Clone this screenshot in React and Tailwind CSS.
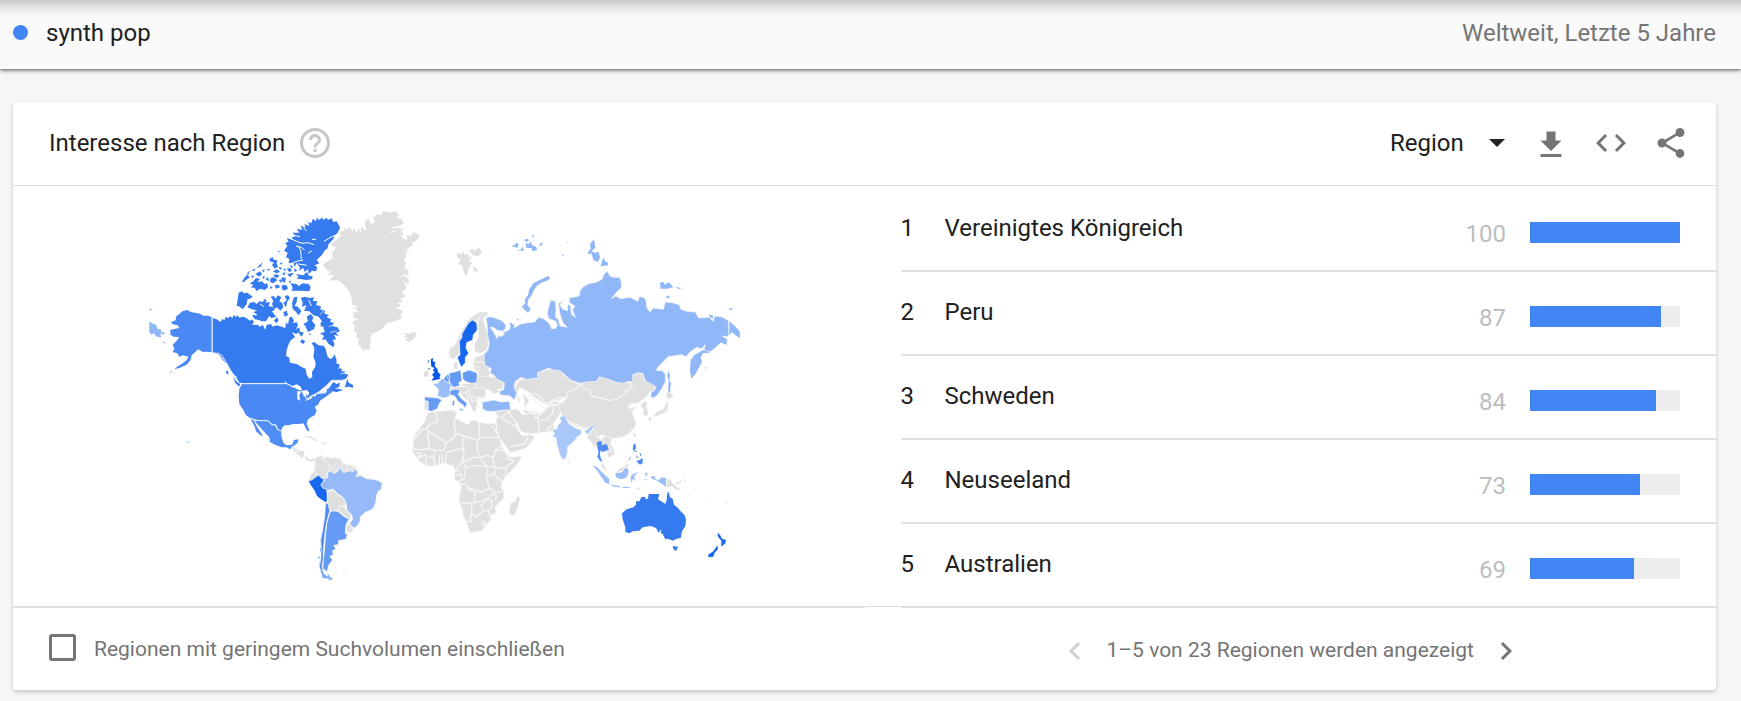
import React, { useState } from "react";

const regions = [
  { name: "Vereinigtes Königreich", value: 100 },
  { name: "Peru", value: 87 },
  { name: "Schweden", value: 84 },
  { name: "Neuseeland", value: 73 },
  { name: "Australien", value: 69 },
];

const Icon = ({ d, className = "" }) => (
  <svg viewBox="0 0 24 24" className={`size-9 fill-current ${className}`} aria-hidden="true">
    <path d={d} />
  </svg>
);

const icons = {
  help: "M11 18h2v-2h-2v2zm1-16C6.48 2 2 6.48 2 12s4.48 10 10 10 10-4.48 10-10S17.52 2 12 2zm0 18c-4.41 0-8-3.59-8-8s3.59-8 8-8 8 3.59 8 8-3.59 8-8 8zm0-14c-2.21 0-4 1.79-4 4h2c0-1.1.9-2 2-2s2 .9 2 2c0 2-3 1.75-3 5h2c0-2.25 3-2.5 3-5 0-2.21-1.79-4-4-4z",
  download: "M19 9h-4V3H9v6H5l7 7 7-7zM5 18v2h14v-2H5z",
  embed: "M9.4 16.6L4.8 12l4.6-4.6L8 6l-6 6 6 6 1.4-1.4zm5.2 0l4.6-4.6-4.6-4.6L16 6l6 6-6 6-1.4-1.4z",
  share: "M18 16.08c-.76 0-1.44.3-1.96.77L8.91 12.7c.05-.23.09-.46.09-.7s-.04-.47-.09-.7l7.05-4.11c.54.5 1.25.81 2.04.81 1.66 0 3-1.34 3-3s-1.34-3-3-3-3 1.34-3 3c0 .24.04.47.09.7L8.04 9.81C7.5 9.31 6.79 9 6 9c-1.66 0-3 1.34-3 3s1.34 3 3 3c.79 0 1.5-.31 2.04-.81l7.12 4.16c-.05.21-.08.43-.08.65 0 1.61 1.31 2.92 2.92 2.92s2.92-1.31 2.92-2.92-1.31-2.92-2.92-2.92z",
  left: "M15.41 7.41L14 6l-6 6 6 6 1.41-1.41L10.83 12z",
  right: "M10 6L8.59 7.41 13.17 12l-4.58 4.59L10 18l6-6z",
};

const WorldMap = () => (
  <svg viewBox="-18 6 1830 1170" className="w-full max-w-[610px]" role="img" aria-label="Interesse nach Region">
    {/* Nordamerika */}
    <g stroke="#f5f5f5" strokeWidth="0">
      <path fill="#4a89f3" d="M215,352 205,347 190,347 180,341 165,338 152,336 142,330 128,333 118,342 107,350 108,360 94,366 96,372 113,376 118,384 106,386 90,390 92,398 90,403 100,410 118,411 112,420 104,428 98,434 103,446 98,456 112,460 118,470 130,466 145,470 140,480 128,490 112,500 102,508 118,504 140,494 152,480 155,466 168,454 175,448 188,456 200,455 215,457Z M88,517 97,513 95,517Z M28,326 36,328 30,331Z M144,724 148,726 145,729Z" />
      <path fill="#367af0" d="M217,354 230,358 242,366 246,357 254,360 256,351 264,354 270,349 278,354 281,344 288,352 292,346 298,353 308,350 318,353 330,362 336,358 342,366 336,375 352,374 360,380 368,374 376,390 380,374 392,372 398,380 410,376 425,380 436,384 438,366 444,374 448,352 456,350 462,362 458,370 470,366 474,376 468,388 478,382 480,395 468,402 456,396 465,412 453,420 447,430 440,450 438,468 447,472 450,488 470,492 486,502 497,506 500,525 508,536 517,532 516,516 525,502 527,488 520,470 523,450 522,440 515,430 522,426 536,436 550,437 556,444 560,460 563,470 572,478 580,470 583,462 590,480 589,490 600,494 596,502 606,508 604,514 616,514 612,520 625,524 618,536 606,540 575,541 568,548 548,565 530,580 515,585 500,596 498,580 485,572 470,566 455,558 440,549 308,549 298,548 290,535 280,522 268,505 262,492 248,480 238,466 228,460 217,458Z" />
      <path fill="#367af0" d="M622,536 626,548 640,556 638,564 628,560 614,562 618,550Z M570,560 580,546 590,552 600,548 598,560 584,566 594,566 610,570 590,576 576,574 572,582 565,572Z M280,530 290,545 300,552 298,560 286,550Z M258,512 264,514 266,524 259,520Z" />
      <path fill="#367af0" d="M598,78 590,64 580,66 575,55 564,60 560,53 550,60 546,52 538,60 530,53 528,64 518,56 514,70 504,66 508,78 494,72 496,84 482,76 486,90 470,86 478,98 458,98 466,108 454,114 458,120 440,114 446,125 436,128 442,138 432,152 443,158 438,172 448,176 446,190 460,188 464,200 470,188 480,204 476,212 490,204 494,216 504,208 506,222 516,212 528,214 532,202 524,196 538,190 530,180 545,166 555,150 562,146 566,132 580,118 584,106 592,100 600,84Z" />
      <path fill="#367af0" d="M468,222 490,226 500,216 508,228 518,228 516,238 500,240 484,238 470,236 476,230Z M452,250 470,252 476,258 488,250 506,252 512,262 508,274 480,272 455,272 458,264Z M440,206 450,204 456,212 448,216Z M425,232 438,234 434,248 426,244Z M442,222 462,218 450,232Z M446,244 454,242 450,250Z" />
      <path fill="#367af0" d="M296,278 305,274 312,280 322,278 338,290 330,296 322,298 320,312 308,328 296,318 290,318Z M330,308 342,306 350,312 358,304 368,306 374,296 380,302 376,308 390,306 386,318 400,322 404,330 396,334 408,350 394,354 388,348 378,364 366,364 356,360 344,358 336,346 352,344 340,336 352,332 336,328 322,322Z" />
      <path fill="#367af0" d="M306,246 314,232 328,218 324,228 330,232 318,240 312,246Z M318,222 332,210 326,220Z M334,214 346,204 344,212Z M350,204 362,192 368,186 362,200Z M330,250 340,244 348,234 360,236 352,246 366,244 374,252 382,250 384,262 374,270 360,266 350,274 344,264 332,262 340,256Z M346,222 360,214 366,222 358,230Z M364,212 374,208 372,216Z M376,238 384,232 388,244Z M388,176 398,172 402,180 412,180 410,190 414,200 404,206 396,194 402,188 390,184Z M418,188 428,188 424,194Z M380,208 390,206 388,212Z M392,234 402,232 412,240 400,250 390,246Z M416,240 426,238 424,250Z M414,152 420,154 416,158Z M398,214 412,208 420,216 410,220Z M426,222 436,216 434,226Z" />
      <path fill="#367af0" d="M404,222 418,226 412,234 402,230Z M428,254 440,256 444,266 432,272 424,264Z M404,256 416,254 420,262 408,266Z M390,258 398,262 392,268Z M448,196 458,198 456,206Z M416,200 426,204 420,210Z M432,204 438,210 432,214Z M462,204 472,212 464,216Z M334,228 342,226 338,236Z M366,230 374,228 372,238Z" />
      <path fill="#367af0" d="M392,290 402,288 406,296 414,286 424,292 418,304 426,308 430,320 422,332 410,322 402,328 396,312 400,302Z M434,288 444,286 450,294 442,304 438,322 430,310 440,300Z M402,362 410,352 416,360 410,370Z M430,336 440,332 444,346 434,350Z M420,310 426,316 422,322Z" />
      <path fill="#367af0" d="M462,292 472,290 470,306 464,318 474,320 484,334 476,346 466,334 458,326 456,310Z M482,294 494,290 508,294 522,292 518,302 532,304 528,314 544,320 540,328 556,332 552,340 566,346 560,352 574,358 570,366 582,368 576,378 592,382 600,394 588,398 596,408 582,404 588,418 578,420 584,432 580,442 566,432 556,418 546,420 552,408 540,400 554,396 550,380 540,372 546,364 536,350 520,346 508,334 492,332 500,316 486,320 488,306Z M500,350 512,342 520,352 516,364 526,374 522,388 504,396 496,378 490,372 504,364Z M476,394 492,398 484,410 478,402Z M486,418 496,424 490,432 480,426Z M544,370 548,378 542,382Z M508,400 514,404 508,406Z" />
      <g fill="none" stroke="#fff" strokeWidth="3">
        <path d="M452,116 470,124 486,130 504,128 522,134 M468,138 484,142 494,150 M484,178 482,150 474,140 M552,124 568,114 584,106 M456,190 470,184 490,180 M504,160 516,152 M490,84 500,92 M462,106 480,110 M476,192 500,196 M360,312 372,320 M506,300 514,318 M334,340 350,346 M516,118 528,118" />
        <path strokeWidth="2" d="M232,458 246,466 256,482 266,500 276,518 290,538 M280,524 292,532 M552,330 540,344 M580,376 566,380 M590,392 570,398 M606,500 594,506 M616,518 602,522" />
      </g>
      <path fill="#4a89f3" d="M306,552 440,552 456,560 480,568 500,598 516,588 532,582 556,580 562,566 572,562 572,576 566,584 552,594 540,602 534,614 524,620 530,632 524,646 512,652 503,660 500,672 508,690 504,695 496,682 490,670 478,672 460,672 445,676 434,676 426,684 424,692 415,690 408,674 398,674 386,662 350,660 330,654 318,646 310,630 298,612 296,590 298,566Z" />
      <path fill="#508df4" d="M344,663 385,664 395,676 405,676 412,690 424,694 424,708 430,728 440,736 456,734 462,720 476,718 472,730 460,738 450,748 440,742 425,742 405,734 390,726 388,712 375,698 360,682Z M332,657 340,659 352,682 368,706 364,708 348,694 344,680Z" />
      <path fill="#fff" d="M452,560 470,553 482,560 486,570 476,570 466,564Z M472,574 484,574 478,586 480,602 472,598Z M486,572 500,570 508,578 504,588 496,580 492,590Z M494,602 504,594 518,588 514,596Z M516,586 530,582 526,590Z" />
      <path fill="none" stroke="#dce7fb" strokeWidth="3" d="M217,350V458 L232,460 244,470 254,482 M306,551H436V545L440,551 456,558 M498,601 514,592 528,580 548,576 560,556 574,541H610 M548,578 558,578 560,566 M330,655 350,661 384,662 396,675 406,673 412,688 424,693" />
    </g>

    {/* Grönland und Island */}
    <path fill="#e0e0e0" d="M598,100 604,90 614,96 612,84 624,88 628,80 640,96 640,80 652,102 654,84 664,100 662,78 680,92 674,68 684,54 694,72 706,66 700,54 710,42 724,44 730,33 748,38 766,34 778,46 768,52 784,58 792,70 778,78 764,80 748,88 770,84 790,86 782,96 790,100 786,114 802,122 800,106 812,108 822,96 840,106 828,124 816,126 818,136 804,144 806,156 798,156 800,170 792,178 798,190 792,204 806,210 804,226 792,224 808,240 804,254 792,250 800,264 786,276 796,290 780,296 788,306 770,310 784,316 770,324 790,334 780,346 788,352 770,362 740,370 728,385 710,396 698,400 690,412 692,426 688,452 674,446 674,456 662,442 654,430 656,416 648,412 652,400 642,392 644,376 636,366 654,358 636,350 644,344 636,338 656,334 640,324 654,318 636,314 634,290 625,270 605,248 590,240 570,242 576,230 584,226 560,224 574,216 560,210 548,195 562,184 578,176 576,160 590,140 578,140 574,130 592,118 604,106Z M783,396 790,402 797,398 806,402 822,395 830,404 822,416 808,426 794,420 802,414 790,410 800,406Z" />
    <path fill="none" stroke="#fff" strokeWidth="3" d="M796,220 784,232 M776,322 764,326 M792,112 778,104 M770,92 750,98 M806,146 796,152 M640,330 650,324 M802,250 790,246" />
    {/* Mittelamerika und Karibik */}
    <path fill="#e8e8e8" d="M452,738 470,746 486,756 492,766 488,776 474,766 458,752Z M490,708 510,708 526,718 540,726 524,722 510,714Z M546,726 562,728 560,734 546,732Z" />
    <path fill="#90b7f8" d="M28,364 36,370 48,374 52,386 66,390 62,396 76,398 70,404 60,400 64,412 50,410 42,400 34,404 28,396Z M66,424 78,428 72,430Z" />

    {/* Südamerika */}
    <g transform="translate(450 660)" stroke="#f5f5f5" strokeWidth="3" strokeLinejoin="round">
      <path fill="#e0e0e0" d="M76,114 88,108 98,106 96,118 106,112 124,113 140,113 154,118 158,128 172,134 190,136 200,146 204,158 160,160 120,190 110,240 90,200 56,180 62,164 74,150Z" />
      <path fill="none" d="M98,106 102,122 116,128 120,142 114,156 M158,128 150,144 M172,134 174,150 M188,136 186,150 M62,160 76,158 86,168 M120,140 138,150 152,144" />
      <path fill="#96baf8" d="M112,158 124,152 130,160 140,156 152,142 160,158 178,152 190,154 199,146 204,160 198,170 212,166 230,176 250,178 266,182 277,190 275,206 264,216 260,226 258,246 250,266 238,272 224,278 212,290 210,306 198,322 190,324 178,312 188,296 184,284 170,270 168,250 158,232 140,220 130,208 110,212 96,204 92,192 104,182 106,172 114,172Z" />
      <path fill="#1767ee" strokeWidth="2" d="M55,182 66,180 76,172 86,166 96,176 104,178 98,186 92,194 100,206 108,206 112,220 113,240 108,248 92,238 80,228 72,210 62,196Z" />
      <path fill="#e0e0e0" d="M112,216 130,208 138,220 158,232 168,250 166,258 148,260 144,274 124,272 118,274 112,250Z M148,260 164,256 168,270 184,284 180,298 166,290 152,278 144,272Z M168,318 180,312 190,326 184,338 168,336Z" />
      <path fill="#4d8bf3" d="M107,250 114,250 119,274 112,300 106,330 103,360 100,390 100,420 96,440 100,460 118,474 96,466 88,440 92,420 94,390 92,360 98,330 104,290Z" strokeWidth="2" />
      <path fill="#659bf5" d="M119,278 126,272 144,274 160,288 178,298 172,306 168,316 166,338 172,346 168,358 146,362 146,374 132,376 138,388 128,392 130,404 120,410 128,420 116,436 112,456 98,446 100,420 103,390 106,350 110,310Z" />
      <path fill="#7fabf7" strokeWidth="0" d="M84,408 90,412 86,418Z M90,380 94,392 90,396Z M88,424 94,434 90,440Z M92,444 100,456 96,464Z M94,466 110,468 130,476 114,482 118,476 98,474Z M112,458 122,474 114,472Z" />
      <path fill="#e0e0e0" strokeWidth="0" d="M160,450 167,452 160,456Z M24,92 44,94 42,106 28,106Z M44,108 60,120 74,114 76,120 62,126 46,118Z" />
    </g>

    {/* Europa, Naher Osten und Afrika */}
    <g transform="translate(780 60)" stroke="#f7f7f7" strokeWidth="4" strokeLinejoin="round">
      <path fill="#e0e0e0" strokeWidth="2" d="M85,578 110,574 140,572 163,570 170,582 164,594 180,600 195,610 207,612 212,602 225,600 238,606 262,612 285,610 290,622 284,630 274,616 288,636 300,655 302,672 310,688 325,702 330,712 364,708 360,720 350,735 330,755 318,768 307,785 303,800 311,815 312,835 298,848 285,860 287,880 275,885 272,900 255,922 245,932 212,938 206,930 200,905 190,890 186,865 176,845 180,820 184,800 176,785 165,778 163,765 166,750 158,736 145,734 138,728 105,738 80,738 60,726 50,712 40,700 36,688 42,675 38,660 50,635 62,620 72,608 78,590Z" />
      <path fill="none" d="M108,576 114,604 88,614 78,628 62,628 60,636 42,660 M78,628 138,668 162,652 168,640 162,610 168,596 M84,638 88,686 56,690 38,684 M138,668 134,690 108,692 88,686 M168,640 192,648 232,660 238,656 238,606 M238,652H296 M192,648 186,686 138,698 136,728 M232,660 232,688 240,712 224,712 190,724 182,730 168,748 M190,684 192,706 186,722 M240,712 264,706 280,712 286,690 302,680 M286,690 310,692 324,704 322,716 344,722 318,742 300,746 282,740 278,714 M240,712 250,728 264,740 282,740 M190,726 198,744 206,740 230,736 260,740 M198,744 192,776 176,784 M262,742 260,770 264,790 268,806 252,812 246,818 226,808 204,806 200,794 182,792 M284,742 284,760 264,768 M318,742 316,768 M284,766 304,784 M306,814 286,818 276,808 266,804 M178,848 214,850 224,848 248,842 262,836 280,822 M204,806 226,818 222,846 M216,852 214,880 212,906 198,904 M214,880 230,890 250,872 242,852 M246,852 262,838 276,842 276,860 266,872 250,872 M276,820 290,826 286,840 M266,872 272,894 M246,910 254,904 260,912 250,918Z M60,712 76,704 80,738 M84,712 102,710 104,738 M104,690 100,710 M118,706 118,736 M126,704 128,730 M166,752 182,752 M170,766 184,762 184,776 M46,700 60,698 62,706 50,714" />
      <path fill="#e0e0e0" strokeWidth="0" d="M354,826 360,836 352,862 344,884 332,886 328,874 332,850 346,844Z" />
      <path fill="#e0e0e0" strokeWidth="3" d="M284,576 312,570 332,570 350,566 368,584 400,578 416,572 420,580 462,546 480,560 488,574 474,590 460,612 464,632 420,638 400,642 384,640 404,652 392,668 378,684 354,692 330,698 318,680 300,656 290,630 288,600 294,590Z" />
      <path fill="#fff" stroke="none" d="M346,604 352,608 360,630 372,638 386,638 382,648 364,646 352,628Z" />
      <path fill="none" d="M290,590 308,590 328,574 M306,596 346,618 360,634 M326,572 334,590 346,604 M330,680 350,676 376,670 384,652 M412,578 414,602 418,636 M418,602 442,598 458,580 462,560 M440,630 456,614" />
      <path fill="#e0e0e0" d="M344,500 356,482 376,474 390,474 412,474 412,456 440,450 452,444 472,448 486,454 494,468 520,484 540,492 530,506 514,514 500,530 480,540 470,556 440,556 424,546 400,530 386,516 372,512 368,522 380,530 388,544 376,560 384,570 420,578 410,596 400,580 372,580 364,560 354,540 346,520Z" />
      <path fill="#fff" stroke="none" d="M358,504 376,508 370,518 364,522 372,534 374,544 372,556 382,572 366,570 358,556 360,540 352,526 352,514Z" />
      <path fill="none" d="M386,516 388,540 400,536 430,562 440,566 M400,520 416,526 436,548 452,560 450,548 476,540 M382,572 420,582 440,568" />
      <path fill="#e0e0e0" strokeWidth="2" d="M232,470 244,466 270,470 296,474 312,490 306,506 292,510 298,516 282,522 272,512 256,508 258,524 250,536 232,536 232,556 222,570 212,558 206,544 190,530 178,514 150,514 152,504 186,500 186,492 210,490Z" />
      <path fill="none" strokeWidth="3" d="M184,500 200,498 206,508 M230,488 226,502 210,512 190,518 M226,502 256,506 M206,514 214,530 226,532 254,532 M204,520 206,542 M214,530 216,546 236,538 M192,516 202,526" />
      <path fill="#e0e0e0" strokeWidth="2" d="M146,402 150,384 166,374 174,356 182,338 196,316 206,300 216,290 226,282 240,276 262,276 264,288 254,290 250,300 262,340 266,374 258,392 240,400 226,396 222,376 236,350 232,306 218,300 200,320 180,360 178,400 160,418 150,414Z M224,412 254,402 256,420 270,458 264,470 234,468 234,456 224,450 220,432Z M160,430 172,426 174,446 162,448Z" />
      <path fill="none" strokeWidth="3" d="M226,426 250,426 M224,438 244,444 234,456 M250,426 256,440 M232,306 240,290" />
      <path fill="#1767ee" strokeWidth="2" d="M218,300 230,308 232,330 220,344 218,360 200,368 198,384 206,400 196,412 196,428 184,442 176,424 172,412 180,404 178,364 186,352 186,342 194,328 206,308Z" />
      <path fill="#659bf5" strokeWidth="2" d="M150,458 164,456 182,450 186,482 176,488 180,496 164,502 152,498 148,480 142,474Z M188,458 206,450 226,456 232,462 230,488 214,490 196,484 188,476Z M132,474 146,460 150,470 146,488 132,484Z" />
      <path fill="#0659e8" strokeWidth="0" d="M92,418 100,414 98,424 106,426 104,438 112,446 114,456 122,464 118,472 122,476 106,480 94,482 102,472 96,464 104,456 98,450 104,444 94,440Z M84,446 90,444 88,450Z M82,424 86,420 86,430Z" />
      <path fill="#e0e0e0" strokeWidth="0" d="M72,456 82,450 86,458 84,470 72,470Z" />
      <path fill="#9bbef9" strokeWidth="2" d="M98,492 112,490 122,480 130,474 136,484 154,492 150,506 152,526 140,532 130,534 112,528 116,510 108,500Z" />
      <path fill="#679cf5" strokeWidth="2" d="M74,530 90,532 114,534 126,540 118,550 112,566 96,574 84,572 84,544 74,542Z" />
      <path fill="#e0e0e0" strokeWidth="2" d="M74,544 84,544 84,570 74,570Z" />
      <path fill="#659bf5" strokeWidth="2" d="M150,512 166,508 180,510 178,518 174,522 184,536 202,550 198,558 196,566 190,556 174,544 164,528 150,524Z M176,566 190,566 186,574Z M158,540 164,544 162,558 156,556Z" />
      <path fill="#90b7f8" strokeWidth="2" d="M246,546 262,544 282,540 304,546 328,544 332,570 312,570 286,574 262,574 248,568Z" />
      <path fill="#e0e0e0" strokeWidth="0" d="M170,98 184,102 190,94 196,106 204,98 208,112 216,110 206,126 218,126 210,138 204,152 198,170 190,152 186,136 174,132 182,122 172,112Z M206,94 216,86 226,92 236,82 246,96 236,108 220,106 212,98Z M218,138 232,146 234,156 222,154Z M270,88 276,88 272,92Z M214,556 222,556 230,570 220,576Z" />
    </g>

    {/* Russland und Asien */}
    <g transform="translate(1020 60)" stroke="#f5f5f5" strokeWidth="3" strokeLinejoin="round">
      <path fill="#e0e0e0" d="M302,490 320,484 350,484 357,468 386,476 400,488 430,484 456,488 458,460 480,458 490,466 494,482 520,490 526,498 522,514 508,516 502,528 488,540 470,550 456,550 444,560 448,566 470,562 456,574 462,592 468,606 464,622 448,640 430,650 400,656 384,652 370,644 350,652 338,628 310,626 280,616 262,600 246,586 240,572 234,552 250,546 262,532 262,518 294,504Z" />
      <path fill="none" strokeWidth="4" d="M302,490 312,504 330,512 334,528 360,534 390,542 416,536 424,526 440,524 436,514 456,504 450,490 M200,554 218,540 234,534 262,532 M206,556 236,552 M264,606 284,612 310,622 330,624" />
      <path fill="#e0e0e0" strokeWidth="0" d="M482,554 494,544 500,548 498,560 504,576 500,588 490,584 492,570Z M560,516 572,520 580,528 572,534 560,536Z M560,540 564,556 562,572 550,580 536,584 528,590 520,588 534,574 546,570 556,560Z M506,594 514,590 512,602 506,602Z M462,640 468,644 464,656Z" />
      <path fill="#90b7f8" strokeWidth="2" d="M18,294 30,290 46,294 66,302 78,316 76,328 66,334 50,330 40,322 30,322 40,334 46,346 52,356 56,346 64,350 74,342 68,336 80,334 90,326 90,312 104,312 102,324 122,312 144,308 164,306 176,292 190,296 204,306 212,318 214,326 226,326 232,316 228,304 206,296 202,276 212,240 226,244 228,272 226,290 236,300 240,318 262,322 250,310 242,290 238,272 236,250 250,240 240,254 248,268 262,272 264,252 272,258 274,282 286,292 278,270 284,258 268,248 268,234 298,228 300,212 310,200 330,190 346,188 366,178 372,162 382,154 392,170 404,172 418,172 424,186 424,204 412,214 394,236 408,228 422,236 450,232 474,244 478,230 490,232 498,240 500,262 510,276 520,264 550,268 556,246 576,248 598,254 602,268 620,274 646,276 656,294 688,292 700,304 704,288 724,290 746,302 746,350 726,348 742,358 740,376 722,368 706,384 690,396 672,390 676,374 664,386 650,382 630,396 618,410 606,404 564,410 532,444 530,452 546,452 556,462 556,486 544,508 532,526 520,534 512,530 514,514 522,514 528,500 496,482 488,460 472,458 458,464 458,486 444,484 430,490 404,486 386,478 358,470 350,484 320,486 300,490 272,480 252,462 240,452 220,450 208,444 186,452 172,458 174,474 140,478 124,472 106,484 102,500 110,520 104,540 90,528 60,524 58,514 70,510 74,490 66,484 52,478 42,466 30,458 34,446 14,434 12,404 24,390 28,370 22,340 22,316Z" />
      <path fill="#90b7f8" strokeWidth="0" d="M204,168 210,172 206,180 184,188 172,196 162,210 154,228 146,236 142,254 152,268 144,278 132,268 126,260 136,250 134,238 144,226 148,208 160,190 184,178Z M748,304 764,318 776,330 780,338 780,354 766,346 756,336 748,346Z M668,390 682,394 690,400 670,398 662,412 666,426 658,440 648,460 634,476 630,452 632,420 644,404 660,396Z M566,452 570,466 568,484 574,490 570,506 572,520 564,512 566,484 562,466Z M322,100 332,86 330,72 342,58 346,84 334,92 344,98 356,96 360,112 354,126 340,120 334,100 326,102Z M362,138 370,112 376,124 384,128 384,136 368,138Z M540,188 550,186 556,194 564,186 574,194 580,202 560,206 542,206Z M584,200 604,204 598,208Z M556,232 566,226 570,236Z M742,268 756,264 758,270Z M94,78 104,74 108,68 116,72 112,84 102,80Z M112,92 124,88 128,80 132,92Z M136,70 148,72 152,62 156,76 168,80 172,90 158,94 154,84 140,84Z M132,60 142,56 148,60 140,66Z M158,42 162,48 156,56Z M176,74 190,66 184,78Z M262,66 266,68 262,70Z M248,104 252,108 246,108Z M88,310 96,308 96,320Z M112,296 118,298 112,302Z M686,284 698,286 700,296 690,292Z M676,440 682,444 676,446Z" />
      <path fill="#a9c7fa" strokeWidth="2" d="M216,628 230,628 232,618 244,604 238,592 256,586 260,600 268,612 286,624 304,630 304,642 292,650 280,666 262,682 262,700 256,716 250,720 240,706 230,670 228,654 216,648 224,642Z M312,634 322,628 336,616 344,620 334,630 324,644Z" />
      <path fill="#e0e0e0" strokeWidth="2" d="M320,650 330,640 340,624 350,648 362,660 374,648 388,650 396,660 390,672 402,688 404,702 386,714 380,696 364,680 352,672 344,684 338,672Z M266,716 270,726 264,730Z" />
      <path fill="none" d="M370,652 372,668 384,676 396,694 M380,698 394,696" />
    </g>

    {/* Südostasien und Ozeanien */}
    <g transform="translate(1320 510)" strokeLinejoin="round">
      <path fill="#4d8bf3" d="M50,218 60,212 66,218 64,226 80,222 86,238 74,244 66,246 62,240 60,252 62,264 68,276 60,272 52,260 56,248 52,232Z M160,224 166,220 168,234 164,240 172,246 166,246 158,238Z M168,274 178,270 188,264 188,280 180,284 172,276Z M178,248 184,252 182,260Z M144,272 154,258 150,268Z M170,256 174,262 170,266Z" />
      <path fill="#9bbef9" d="M38,286 50,290 62,302 74,314 88,328 88,342 76,338 62,318 50,300Z M88,342 104,346 120,348 122,352 102,350Z M106,308 124,308 136,294 144,296 146,308 138,324 122,328 108,322Z M154,316 164,310 178,306 166,314 162,322 170,332 160,326 154,338 152,326Z M210,320 226,318 224,326 236,330 244,322 258,324 258,350 246,342 232,332 218,328Z M196,306 204,312 196,320Z M126,350 140,350 156,354 130,354Z M190,328 206,328 198,330Z" />
      <path fill="#e0e0e0" d="M64,280 72,286 80,302 70,296 64,288Z M108,306 122,294 132,292 140,282 148,286 134,294 124,304Z M260,326 274,332 282,344 300,358 304,362 288,358 274,348 260,354Z M284,338 298,336 302,330 304,338 290,342Z M160,188 166,190 162,202Z M102,214 110,214 106,220Z M310,326 318,332 310,332Z M344,352 350,356 346,358Z M378,384 384,388 380,390Z M436,398 446,390 440,400Z M170,354 186,352 174,360Z" />
      <path fill="#367af0" d="M126,430 140,418 160,412 168,404 168,394 178,394 184,382 194,380 198,388 204,386 206,372 220,372 238,372 234,388 244,394 256,402 260,390 262,368 266,366 270,382 278,386 282,404 294,414 302,424 314,436 318,450 316,468 306,484 302,504 290,506 280,512 262,506 256,508 248,492 242,490 244,476 236,488 228,474 212,468 188,472 178,482 158,484 148,490 136,486 136,472 128,448Z M278,528 294,530 288,544 280,536Z" />
      <path fill="#1b69ee" d="M412,488 420,494 426,506 438,510 436,520 424,530 424,512 414,500Z M412,526 414,538 404,548 400,560 386,562 384,554 400,544Z" />
    </g>
  </svg>
);

const Header = () => (
  <header className="relative flex h-[69px] items-center justify-between bg-[#fafafa] bg-linear-to-b from-[#c8c8c8] via-[#e6e6e6] via-[8px] to-[#fafafa] to-[17px] pr-[25px] pb-1 pl-[13px] text-2xl shadow-[0_1px_4px_rgba(0,0,0,0.7)]">
    <div className="flex items-center gap-[18px]">
      <span className="size-[15px] rounded-full bg-[#4285f4]" />
      <span className="text-[#212121]">synth pop</span>
    </div>
    <span className="text-[#757575]">Weltweit, Letzte 5 Jahre</span>
  </header>
);

const RegionRow = ({ rank, name, value }) => (
  <li className="flex h-[84px] items-center border-b-2 border-[#e0e0e0] pr-9 pb-[2px] text-2xl">
    <span className="w-11 text-[#212121]">{rank}</span>
    <span className="flex-1 text-[#212121]">{name}</span>
    <div className="flex items-center gap-6 pt-3">
      <span className="text-[#bdbdbd]">{value}</span>
      <div className="mb-1 h-[21px] w-[150px] bg-[#eeeeee]">
        <div className="h-full bg-[#4285f4]" style={{ width: `${value}%` }} />
      </div>
    </div>
  </li>
);

const App = () => {
  const [includeLow, setIncludeLow] = useState(false);
  const [resolution, setResolution] = useState("region");

  return (
    <div className="min-h-screen bg-[#f6f6f6] font-['Roboto',sans-serif]">
      <Header />

      <main className="pt-[33px] pr-[25px] pb-[11px] pl-[13px]">
        <section className="rounded-[3px] bg-white shadow-[0_2px_4px_rgba(0,0,0,0.2)]">
          <div className="flex h-[84px] items-center justify-between border-b border-[#e0e0e0] pr-[27px] pb-[2px] pl-9">
            <div className="flex items-center gap-3">
              <h2 className="text-2xl text-[#212121]">Interesse nach Region</h2>
              <button type="button" aria-label="Hilfe" className="text-[#c6c6c6]">
                <Icon d={icons.help} />
              </button>
            </div>

            <div className="flex items-center text-[#757575]">
              <div className="relative mr-7">
                <select
                  aria-label="Auflösung"
                  value={resolution}
                  onChange={(e) => setResolution(e.target.value)}
                  className="w-[115px] appearance-none bg-transparent text-2xl text-[#212121] outline-none"
                >
                  <option value="region">Region</option>
                  <option value="city">Stadt</option>
                </select>
                <svg viewBox="0 0 16 8" className="pointer-events-none absolute top-1/2 right-0 h-2 w-4 -translate-y-1/2 fill-[#212121]">
                  <path d="M0 0h16L8 8z" />
                </svg>
              </div>
              <div className="flex gap-6">
                <button type="button" aria-label="Herunterladen" className="pt-1"><Icon d={icons.download} /></button>
                <button type="button" aria-label="Einbetten"><Icon d={icons.embed} /></button>
                <button type="button" aria-label="Teilen"><Icon d={icons.share} /></button>
              </div>
            </div>
          </div>

          <div className="grid grid-cols-2 pt-[2px]">
            <div className="flex items-center justify-center border-b-2 border-[#e0e0e0]">
              <WorldMap />
            </div>
            <div className="flex">
              <div className="mb-px w-9 border-b border-[#e0e0e0]" />
              <ol className="flex-1">
                {regions.map((region, idx) => (
                  <RegionRow key={region.name} rank={idx + 1} name={region.name} value={region.value} />
                ))}
              </ol>
            </div>
          </div>

          {/* Fußzeile */}
          <div className="grid h-[82px] grid-cols-2 items-center text-[21px] text-[#757575]">
            <label className="flex items-center gap-[18px] pt-[2px] pl-9">
              <input
                type="checkbox"
                checked={includeLow}
                onChange={(e) => setIncludeLow(e.target.checked)}
                className="mb-[6px] size-[27px] appearance-none rounded-[3px] border-3 border-[#757575] checked:bg-[#757575]"
              />
              Regionen mit geringem Suchvolumen einschließen
            </label>
            <div className="flex items-center justify-center gap-[14px] pt-1">
              <button type="button" aria-label="Zurück" disabled className="text-[#d0d0d0]"><Icon d={icons.left} /></button>
              <span>1–5 von 23 Regionen werden angezeigt</span>
              <button type="button" aria-label="Weiter"><Icon d={icons.right} /></button>
            </div>
          </div>
        </section>
      </main>
    </div>
  );
};

export default App;
